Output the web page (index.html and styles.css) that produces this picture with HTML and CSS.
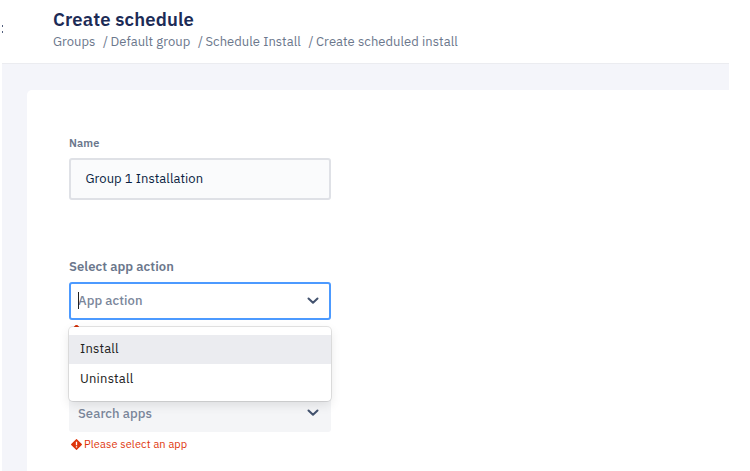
FILE: index.html
```html
<!DOCTYPE html>
<html lang="en">
<head>
<meta charset="utf-8">
<title>Create schedule</title>
<link rel="stylesheet" href="styles.css">
</head>
<body>
<div class="app">
  <header class="header">
    <span class="edge"></span>
    <h1 class="title">Create schedule</h1>
    <nav class="crumbs">
      <a class="c1">Groups</a><a class="c2"><i>/</i>Default group</a><a class="c3"><i>/</i>Schedule Install</a><a class="c4"><i>/</i>Create scheduled install</a>
    </nav>
  </header>
  <main class="main">
    <form class="card">
      <label class="label label-name">Name</label>
      <div class="input"><span>Group 1 Installation</span></div>
      <label class="label label-action">Select app action</label>
      <div class="select-wrap">
        <div class="select focused">
          <span class="caret"></span>
          <span class="placeholder">App action</span>
          <svg class="chevron" width="12" height="8" viewBox="0 0 12 8"><path d="M1.5 1.5 6 5.8l4.5-4.3"/></svg>
        </div>
        <div class="menu">
          <div class="option active">Install</div>
          <div class="option">Uninstall</div>
        </div>
      </div>
      <div class="error hidden-error">
        <svg class="alert" width="11" height="11" viewBox="0 0 11 11"><path class="diamond" d="M5.5 0 11 5.5 5.5 11 0 5.5z"/></svg>
      </div>
      <div class="select">
        <span class="placeholder">Search apps</span>
        <svg class="chevron" width="12" height="8" viewBox="0 0 12 8"><path d="M1.5 1.5 6 5.8l4.5-4.3"/></svg>
      </div>
      <div class="error">
        <svg class="alert" width="11" height="11" viewBox="0 0 11 11"><path class="diamond" d="M5.5.6 10.4 5.5 5.5 10.4.6 5.5z"/><path class="mark" d="M5.5 2.8v3.4M5.5 7.3v1.1"/></svg>
        <span>Please select an app</span>
      </div>
    </form>
  </main>
</div>
</body>
</html>
```
FILE: styles.css
```css
* { box-sizing: border-box; }
body {
  margin: 0;
  background: #fff;
  font-family: "IBM Plex Sans", Roboto, "Liberation Sans", sans-serif;
  font-size: 13px;
  overflow: hidden;
}
.app { width: 727px; margin-left: 2px; height: 471px; display: flex; flex-direction: column; }
.header { position: relative; height: 64px; flex: none; padding: 7px 0 0 51px; border-bottom: 1px solid #ebecf0; background: #fff; }
.edge { position: absolute; left: 0; top: 25px; width: 1px; height: 8px; border-top: 2px solid #53617f; border-bottom: 2px solid #53617f; }
.title { margin: 0; font-size: 18.5px; line-height: 24px; font-weight: 600; color: #1c2b56; letter-spacing: .14px; }
.crumbs { display: flex; margin-top: 2px; line-height: 18px; color: #6b778c; white-space: nowrap; }
.crumbs i { display: inline-block; width: 7.5px; font-style: normal; }
.c1 { width: 50px; }
.c2 { width: 95px; letter-spacing: .04px; }
.c3 { width: 110.5px; letter-spacing: .04px; }
.c4 { letter-spacing: .05px; }
.main { flex: 1; min-height: 0; background: #f4f5fa; padding: 26px 0 0 25px; }
.card { height: 100%; padding: 44px 42px 0; background: #fff; border-radius: 5px 0 0 0; }
.label { display: block; font-weight: 600; color: #6b778c; line-height: 18px; }
.label-name { font-size: 11px; letter-spacing: .1px; }
.label-action { margin-top: 58px; font-size: 13px; letter-spacing: .04px; }
.input { width: 262px; height: 42px; margin-top: 6px; padding: 0 14.5px 2px; display: flex; align-items: center; border: 2px solid #dfe1e6; border-radius: 3px; background: #fafbfc; color: #091e42; letter-spacing: .05px; }
.select-wrap { position: relative; margin-top: 6px; }
.select { position: relative; width: 262px; height: 38px; padding: 0 12.5px 0 9px; display: flex; align-items: center; justify-content: space-between; background: #f4f5f7; border-radius: 3px; }
.focused { padding: 0 10.5px 0 7px; background: #fff; border: 2px solid #4c9aff; }
.focused .placeholder { margin-bottom: 2px; }
.caret { position: absolute; left: 7px; top: 8px; width: 1px; height: 17px; background: #222; }
.placeholder { color: #7a869a; font-weight: 500; letter-spacing: .08px; }
.chevron { fill: none; stroke: #42526e; stroke-width: 2; stroke-linecap: round; stroke-linejoin: round; }
.menu { position: absolute; z-index: 2; left: 0; top: 45px; width: 262px; height: 74px; padding-top: 8px; background: #fff; border-radius: 4px; box-shadow: 0 0 0 1px rgba(0,0,0,.1), 0 4px 11px rgba(0,0,0,.1); }
.option { height: 29px; padding: 0 0 2px 11px; display: flex; align-items: center; color: #222; font-weight: 400; letter-spacing: .2px; }
.option + .option { height: 31px; }
.active { background: #ebecf0; }
.error { display: flex; align-items: center; height: 24px; padding-left: 2px; gap: 2px; font-size: 11px; color: #de350b; letter-spacing: .1px; }
.diamond { fill: #de350b; stroke: #de350b; stroke-linejoin: round; stroke-width: 1.1; }
.mark { stroke: #fff; stroke-width: 1.3; }
.hidden-error { height: 74px; align-items: flex-start; padding-top: 5px; }
```
